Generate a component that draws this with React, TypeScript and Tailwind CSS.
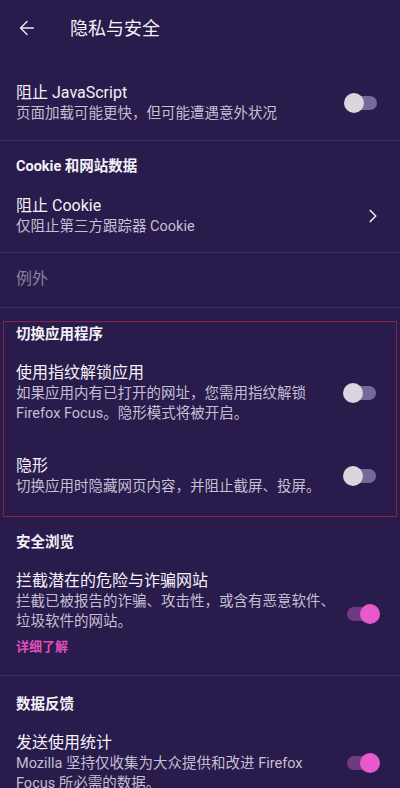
import React from 'react';
import { ArrowLeft, ChevronRight } from 'lucide-react';

const font = { fontFamily: 'Roboto, "Noto Sans CJK SC", sans-serif' };

const Toggle = ({ on }: { on: boolean }) => (
  <div className="relative w-[36px] h-[20px] shrink-0">
    <div
      className={
        on
          ? 'absolute left-[3px] right-[3px] top-[3px] h-[14px] rounded-full bg-[#6e3a82]'
          : 'absolute left-[3px] right-[3px] top-[3px] h-[14px] rounded-full bg-[#75699a]'
      }
    />
    <div
      className={
        on
          ? 'absolute right-0 top-0 w-[20px] h-[20px] rounded-full bg-[#e85acb]'
          : 'absolute left-0 top-0 w-[20px] h-[20px] rounded-full bg-[#dad6de]'
      }
    />
  </div>
);

const Row = ({
  title,
  lines,
  right,
  className = '',
  children,
}: {
  title: string;
  lines: string[];
  right?: React.ReactNode;
  className?: string;
  children?: React.ReactNode;
}) => (
  <div className={'flex items-center pl-4 pr-5 ' + className}>
    <div className="flex-1 min-w-0">
      <div className="text-[16px] leading-[22px] text-[#f4f2f8]">{title}</div>
      <div className="text-[14.5px] leading-[20px] text-[#c5bfd3]">
        {lines.map((l) => (
          <div key={l}>{l}</div>
        ))}
      </div>
      {children}
    </div>
    {right}
  </div>
);

const Divider = () => <div className="h-px bg-[#3b2e5e]" />;

const Header = ({ text, className = '' }: { text: string; className?: string }) => (
  <div className={'px-4 text-[14.5px] leading-[20px] font-bold text-[#f4f2f8] ' + className}>{text}</div>
);

export default function App() {
  return (
    <div className="w-[400px] h-[788px] overflow-hidden bg-[#291b4b]" style={font}>
      <div className="h-14 flex items-center pl-4">
        <ArrowLeft size={22} strokeWidth={1.6} className="text-[#e8e5ef]" />
        <div className="ml-[32px] text-[18px] text-[#f4f2f8]">隐私与安全</div>
      </div>

      <Row
        title="阻止 JavaScript"
        lines={['页面加载可能更快，但可能遭遇意外状况']}
        right={<Toggle on={false} />}
        className="pt-[26px] pb-[16px]"
      />
      <Divider />

      <Header text="Cookie 和网站数据" className="pt-[16px]" />
      <Row
        title="阻止 Cookie"
        lines={['仅阻止第三方跟踪器 Cookie']}
        right={<ChevronRight size={22} strokeWidth={1.8} className="text-[#e8e5ef] mr-[-4px]" />}
        className="pt-[18px] pb-[15px]"
      />
      <Divider />

      <div className="px-4 pt-[16px] pb-[18px] text-[16px] leading-[20px] text-[#8b819e]">例外</div>
      <Divider />

      <div className="mt-[13px] mx-[3px] border border-[#8a2148] pb-[19px]">
        <div className="px-[12px] pt-[3px] text-[14.5px] leading-[20px] font-bold text-[#f4f2f8]">切换应用程序</div>
        <Row
          title="使用指纹解锁应用"
          lines={['如果应用内有已打开的网址，您需用指纹解锁', 'Firefox Focus。隐形模式将被开启。']}
          right={<Toggle on={false} />}
          className="pt-[17px] !pl-[12px] !pr-[17px]"
        />
        <Row
          title="隐形"
          lines={['切换应用时隐藏网页内容，并阻止截屏、投屏。']}
          right={<Toggle on={false} />}
          className="pt-[31px] !pl-[12px] !pr-[17px]"
        />
      </div>

      <Header text="安全浏览" className="pt-[16px]" />
      <Row
        title="拦截潜在的危险与诈骗网站"
        lines={['拦截已被报告的诈骗、攻击性，或含有恶意软件、', '垃圾软件的网站。']}
        right={<Toggle on={true} />}
        className="pt-[17px] pb-[18px]"
      >
        <div className="mt-[5px] text-[13px] leading-[20px] font-bold text-[#e04fb8]">详细了解</div>
      </Row>
      <Divider />

      <Header text="数据反馈" className="pt-[19px]" />
      <Row
        title="发送使用统计"
        lines={['Mozilla 坚持仅收集为大众提供和改进 Firefox', 'Focus 所必需的数据。']}
        right={<Toggle on={true} />}
        className="pt-[17px]"
      />
    </div>
  );
}
